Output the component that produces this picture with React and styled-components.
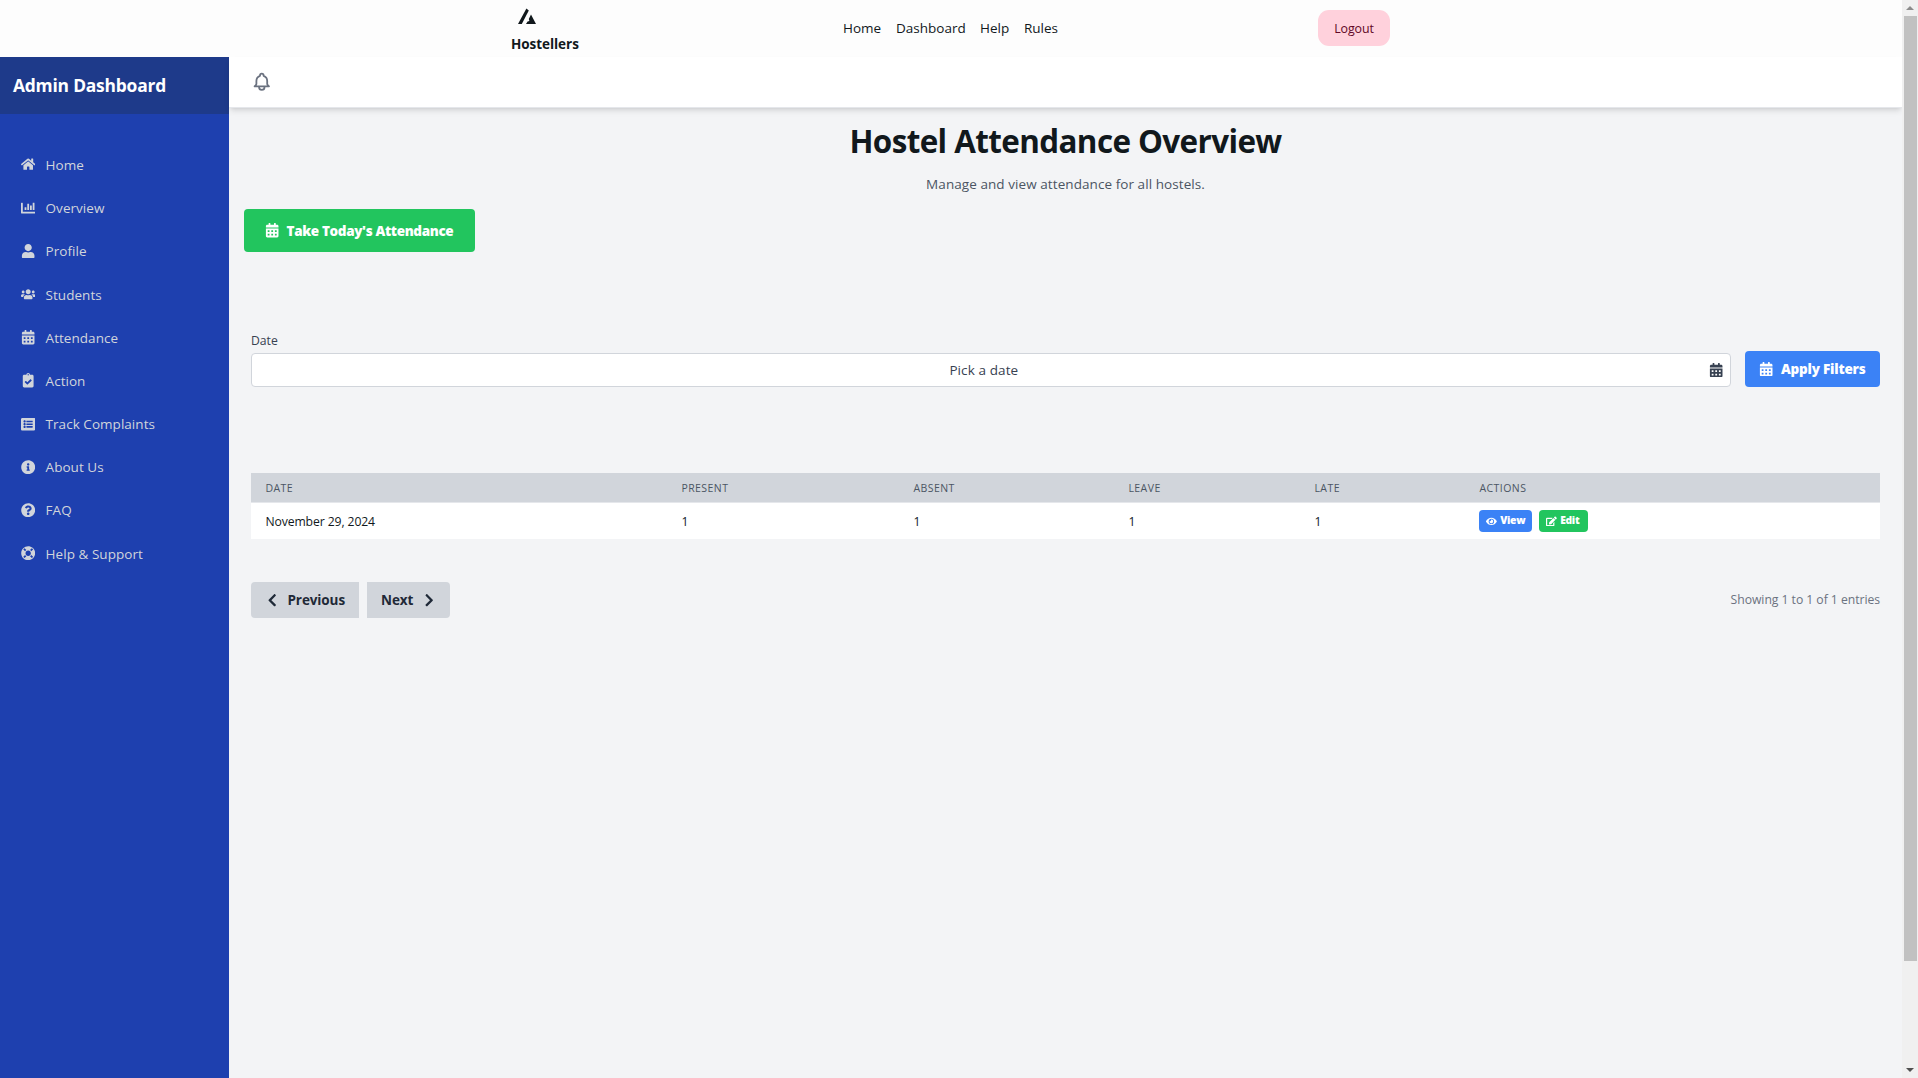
import React from "react";
import styled, { createGlobalStyle } from "styled-components";
import {
  FaHome, FaChartBar, FaUser, FaUsers, FaCalendarAlt, FaClipboardCheck, FaListAlt,
  FaInfoCircle, FaQuestionCircle, FaLifeRing, FaEye, FaEdit,
  FaChevronLeft, FaChevronRight,
} from "react-icons/fa";

const Global = createGlobalStyle`
  * { box-sizing: border-box; }
  html, body { margin: 0; padding: 0; overflow: hidden; }
  body { font-family: "Open Sans", "Noto Sans", sans-serif; font-size: 14px; line-height: 1.5; color: #11181c; background: #f3f4f6; }
  button { font: inherit; color: inherit; border: 0; margin: 0; padding: 0; background: none; }
  svg { display: block; flex: none; }
`;

const Window = styled.div`display: flex; width: 1918px; height: 1078px;`;
const Page = styled.div`flex: 1; display: flex; flex-direction: column;`;

const Nav = styled.header`
  height: 57px; display: grid; grid-template-columns: 843px 475px 1fr;
  align-items: center; background: #fdfdfd;
`;
const Brand = styled.div`padding-left: 511px; height: 57px;`;
const Mark = styled.svg`margin: 8px 0 0 7px;`;
const BrandName = styled.div`
  font-size: 13.5px; font-weight: 700; line-height: 20px; margin-top: 10px; letter-spacing: -0.05px;
`;
const Links = styled.nav`display: flex; gap: 15px; padding-bottom: 1px;`;
const NavLink = styled.a`font-size: 13.5px; white-space: nowrap; width: ${(p) => p.$w}px;`;
const Logout = styled.button`
  width: 72px; height: 36px; border-radius: 11px; background: #ffd1dc; color: #610726;
  font-size: 12.4px; letter-spacing: -0.1px; margin-bottom: 1px; padding-top: 2px;
`;

const Body = styled.div`flex: 1; display: flex; min-height: 0;`;
const Side = styled.aside`width: 229px; background: #1e40af; color: #d1d5db;`;
const SideTitle = styled.div`
  height: 57px; padding: 14px 13px; background: #1e3a8a; color: #fff;
  font-size: 17.4px; font-weight: 700; line-height: 28px; letter-spacing: -0.2px; white-space: nowrap;
`;
const Menu = styled.nav`padding: 29px 0 0 21px; display: grid; grid-auto-rows: 43.2px;`;
const MenuItem = styled.a`
  display: flex; align-items: center; gap: 10.2px; font-size: 13.5px; letter-spacing: 0.04px;
  svg { font-size: 14.4px; }
  span { padding-top: 1px; }
`;

const Main = styled.main`flex: 1; display: flex; flex-direction: column; min-width: 0;`;
const TopBar = styled.div`
  height: 51px; padding: 0 22px; display: flex; align-items: center; background: #fff; color: #6b7280;
  border-bottom: 1px solid #e5e7eb;
  box-shadow: 0 4px 6px -1px rgba(0, 0, 0, 0.1), 0 2px 4px -2px rgba(0, 0, 0, 0.1);
`;
const Title = styled.h1`
  margin: 13px 0 0; text-align: center; font-size: 31.4px; line-height: 40px; font-weight: 700; letter-spacing: -0.6px;
`;
const Subtitle = styled.p`
  margin: 12px 0 0; text-align: center; color: #4b5563; font-size: 13.5px; line-height: 22px; letter-spacing: 0.07px;
`;
const TakeButton = styled.button`
  margin: 14px 0 0 15px; width: 231px; height: 43px; border-radius: 4px; background: #22c55e; color: #fff;
  display: flex; align-items: center; gap: 7.2px; padding-left: 21px;
  font-weight: 800; font-size: 13.5px; letter-spacing: -0.35px; white-space: nowrap;
  svg { font-size: 14.4px; }
  span { padding-top: 1px; }
`;
const Filters = styled.section`margin: 80px 22px 0; display: flex; align-items: flex-end; gap: 14px;`;
const Field = styled.div`flex: 1;`;
const Label = styled.label`
  display: block; font-size: 12.2px; line-height: 18px; height: 21px; font-weight: 500; color: #374151;
`;
const DateInput = styled.div`
  height: 34px; display: flex; align-items: center; padding: 0 7px; background: #fff;
  border: 1px solid #d1d5db; border-radius: 4px; color: #374151;
  svg { font-size: 14.4px; }
`;
const Placeholder = styled.span`flex: 1; text-align: center; font-size: 13.5px; padding-top: 1px; letter-spacing: 0.1px;`;
const ApplyButton = styled.button`
  width: 135px; height: 36px; border-radius: 4px; background: #3b82f6; color: #fff;
  display: flex; align-items: center; gap: 7.2px; padding-left: 14.4px; font-weight: 800; font-size: 13.5px;
  letter-spacing: -0.2px; white-space: nowrap;
  svg { font-size: 14.4px; }
`;
const Table = styled.section`margin: 86px 22px 0;`;
const Row = styled.div`
  display: grid; grid-template-columns: 416px 232px 215px 186px 165px 1fr; align-items: center;
  background: #fff; height: 36px; font-size: 12.2px; letter-spacing: -0.1px;
`;
const HeadRow = styled(Row)`
  background: #d1d5db; height: 30px; border-bottom: 1px solid #e5e7eb; color: #4b5563;
  font-size: 10.5px; font-weight: 500; letter-spacing: 0.45px;
`;
const Cell = styled.div`padding: 2px 0 0 14.4px; display: flex; white-space: nowrap;`;
const Actions = styled.div`padding-left: 14px; display: flex; gap: 7px;`;
const SmallButton = styled.button`
  height: 22px; width: ${(p) => p.$w}px; border-radius: 4px; background: ${(p) => p.$bg}; color: #fff;
  display: flex; align-items: center; gap: 3.2px; padding-left: 7.2px; font-size: 10.3px; font-weight: 800;
  letter-spacing: -0.3px;
  svg { font-size: 10.8px; }
`;
const Pager = styled.section`margin: 43px 22px 0; display: flex; align-items: center; gap: 8px;`;
const PageButton = styled.button`
  width: ${(p) => p.$w}px; height: 36px; background: #d1d5db; color: #1f2937; border-radius: ${(p) => p.$r};
  display: flex; align-items: center; justify-content: space-between; padding: 0 14px;
  font-size: 13.5px; font-weight: 700; letter-spacing: -0.1px;
  svg { font-size: 14.4px; }
  span { padding-top: 1px; }
`;
const Showing = styled.span`
  margin-left: auto; padding-top: 1px; font-size: 12.2px; letter-spacing: -0.04px; color: #6b7280;
`;

const Scroll = styled.div`
  width: 16px; background: #f0f0f0; display: flex; flex-direction: column; align-items: center;
`;
const ScrollArrow = styled.svg`width: 16px; height: 16px;`;
const Thumb = styled.div`width: 13px; height: 945px; margin-left: 1px; background: #c1c1c1;`;
const Track = styled.div`flex: 1;`;

const BellIcon = () => (
  <svg width="21.6" height="21.6" viewBox="0 0 24 24" fill="none" stroke="currentColor" strokeWidth="2" strokeLinecap="round" strokeLinejoin="round">
    <path d="M15 17h5l-1.405-1.405A2.032 2.032 0 0118 14.158V11a6.002 6.002 0 00-4-5.659V5a2 2 0 10-4 0v.341C7.67 6.165 6 8.388 6 11v3.159c0 .538-.214 1.055-.595 1.436L4 17h5m6 0v1a3 3 0 11-6 0v-1m6 0H9" />
  </svg>
);

const links = [["Home", 38], ["Dashboard", 69], ["Help", 29], ["Rules", 34]];
const menu = [
  [FaHome, "Home"], [FaChartBar, "Overview"], [FaUser, "Profile"], [FaUsers, "Students"],
  [FaCalendarAlt, "Attendance"], [FaClipboardCheck, "Action"], [FaListAlt, "Track Complaints"],
  [FaInfoCircle, "About Us"], [FaQuestionCircle, "FAQ"], [FaLifeRing, "Help & Support"],
];
const columns = ["DATE", "PRESENT", "ABSENT", "LEAVE", "LATE", "ACTIONS"];

export default function App() {
  return (
    <Window>
      <Global />
      <Page>
        <Nav>
          <Brand>
            <Mark width="18" height="16" viewBox="0 0 18 16">
              <path d="M0 16 L8.4 0.4 L10.8 2.6 L3.8 16 Z M8 16 L9.6 13.4 L11.4 13 L10.8 11 L13 6.6 L18 16 Z" fill="#11181c" />
            </Mark>
            <BrandName>Hostellers</BrandName>
          </Brand>
          <Links>{links.map(([t, w]) => <NavLink key={t} $w={w}>{t}</NavLink>)}</Links>
          <Logout>Logout</Logout>
        </Nav>
        <Body>
          <Side>
            <SideTitle>Admin Dashboard</SideTitle>
            <Menu>{menu.map(([Icon, t]) => <MenuItem key={t}><Icon /><span>{t}</span></MenuItem>)}</Menu>
          </Side>
          <Main>
            <TopBar><BellIcon /></TopBar>
            <Title>Hostel Attendance Overview</Title>
            <Subtitle>Manage and view attendance for all hostels.</Subtitle>
            <TakeButton><FaCalendarAlt /><span>Take Today's Attendance</span></TakeButton>
            <Filters>
              <Field>
                <Label>Date</Label>
                <DateInput><Placeholder>Pick a date</Placeholder><FaCalendarAlt /></DateInput>
              </Field>
              <ApplyButton><FaCalendarAlt /><span>Apply Filters</span></ApplyButton>
            </Filters>
            <Table>
              <HeadRow>{columns.map((c) => <Cell key={c}>{c}</Cell>)}</HeadRow>
              <Row>
                <Cell>November 29, 2024</Cell><Cell>1</Cell><Cell>1</Cell><Cell>1</Cell><Cell>1</Cell>
                <Actions>
                  <SmallButton $w={53} $bg="#3b82f6"><FaEye />View</SmallButton>
                  <SmallButton $w={49} $bg="#22c55e"><FaEdit />Edit</SmallButton>
                </Actions>
              </Row>
            </Table>
            <Pager>
              <PageButton $w={108} $r="4px 0 0 4px"><FaChevronLeft /><span>Previous</span></PageButton>
              <PageButton $w={83} $r="0 4px 4px 0"><span>Next</span><FaChevronRight /></PageButton>
              <Showing>Showing 1 to 1 of 1 entries</Showing>
            </Pager>
          </Main>
        </Body>
      </Page>
      <Scroll>
        <ScrollArrow viewBox="0 0 16 16"><path d="M4 10 L8 6 L12 10 Z" fill="#8b8b8b" /></ScrollArrow>
        <Thumb />
        <Track />
        <ScrollArrow viewBox="0 0 16 16"><path d="M4 6 L8 10 L12 6 Z" fill="#505050" /></ScrollArrow>
      </Scroll>
    </Window>
  );
}
